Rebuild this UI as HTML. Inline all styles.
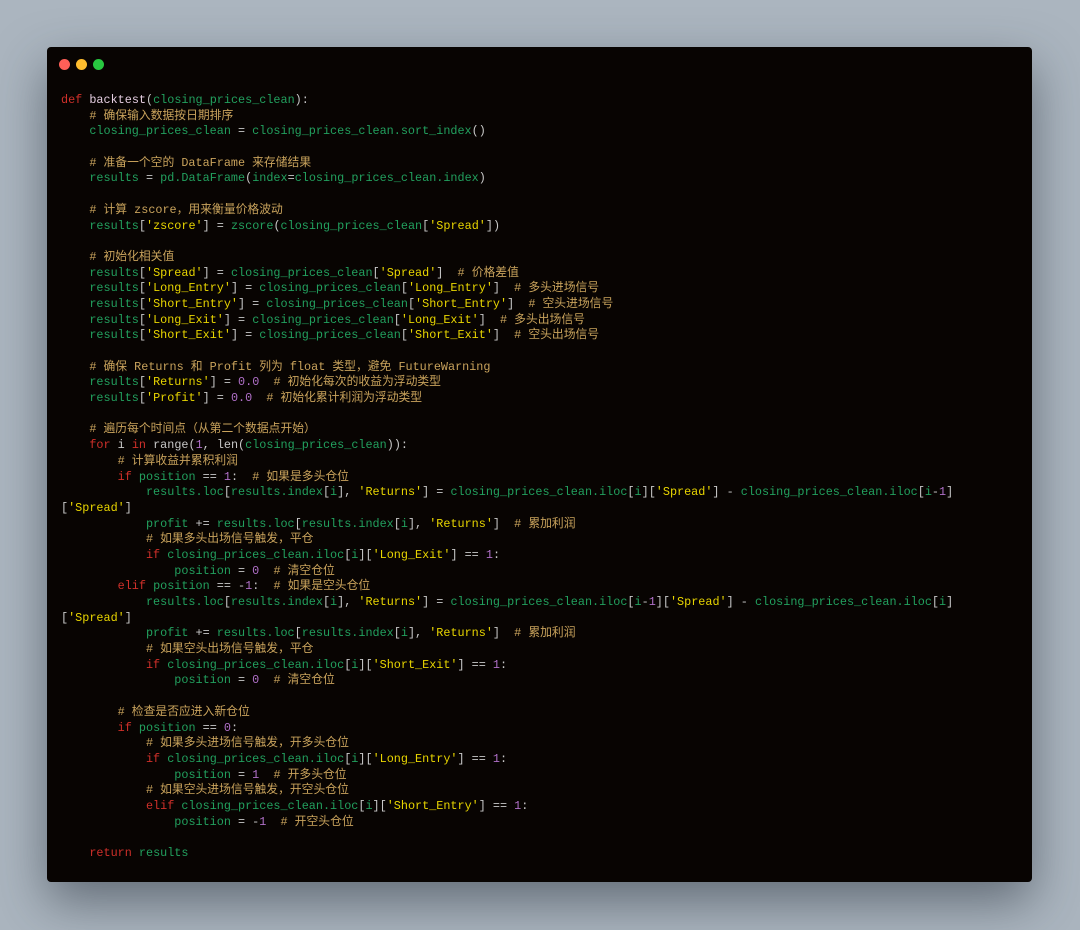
<!DOCTYPE html>
<html><head><meta charset="utf-8"><style>
html,body{margin:0;padding:0;width:1080px;height:930px;background:#abb5bf;overflow:hidden}
.card{position:absolute;left:47px;top:47px;width:985px;height:835px;background:#080402;border-radius:4px;box-shadow:0 20px 50px rgba(40,50,60,.55)}
.dot{position:absolute;top:12px;width:11px;height:11px;border-radius:50%}
pre{position:absolute;left:14px;top:46px;margin:0;font-family:"Liberation Mono","Noto Sans CJK SC",monospace;font-size:11.8px;line-height:15.69px;color:#c8c8c8;white-space:pre}
.k{color:#d0302a}.f{color:#e4cde0}.g{color:#22a05e}.c{color:#c9a35c}.s{color:#e8d500}.n{color:#b070c8}
</style></head><body>
<div class="card">
<div class="dot" style="left:12px;background:#fe5f57"></div>
<div class="dot" style="left:29px;background:#febc2e"></div>
<div class="dot" style="left:46px;background:#28c840"></div>
<pre><span class="k">def</span> <span class="f">backtest</span>(<span class="g">closing_prices_clean</span>):
    <span class="c"># 确保输入数据按日期排序</span>
    <span class="g">closing_prices_clean</span> = <span class="g">closing_prices_clean.sort_index</span>()

    <span class="c"># 准备一个空的 DataFrame 来存储结果</span>
    <span class="g">results</span> = <span class="g">pd.DataFrame</span>(<span class="g">index</span>=<span class="g">closing_prices_clean.index</span>)

    <span class="c"># 计算 zscore，用来衡量价格波动</span>
    <span class="g">results</span>[<span class="s">'zscore'</span>] = <span class="g">zscore</span>(<span class="g">closing_prices_clean</span>[<span class="s">'Spread'</span>])

    <span class="c"># 初始化相关值</span>
    <span class="g">results</span>[<span class="s">'Spread'</span>] = <span class="g">closing_prices_clean</span>[<span class="s">'Spread'</span>]  <span class="c"># 价格差值</span>
    <span class="g">results</span>[<span class="s">'Long_Entry'</span>] = <span class="g">closing_prices_clean</span>[<span class="s">'Long_Entry'</span>]  <span class="c"># 多头进场信号</span>
    <span class="g">results</span>[<span class="s">'Short_Entry'</span>] = <span class="g">closing_prices_clean</span>[<span class="s">'Short_Entry'</span>]  <span class="c"># 空头进场信号</span>
    <span class="g">results</span>[<span class="s">'Long_Exit'</span>] = <span class="g">closing_prices_clean</span>[<span class="s">'Long_Exit'</span>]  <span class="c"># 多头出场信号</span>
    <span class="g">results</span>[<span class="s">'Short_Exit'</span>] = <span class="g">closing_prices_clean</span>[<span class="s">'Short_Exit'</span>]  <span class="c"># 空头出场信号</span>

    <span class="c"># 确保 Returns 和 Profit 列为 float 类型，避免 FutureWarning</span>
    <span class="g">results</span>[<span class="s">'Returns'</span>] = <span class="n">0.0</span>  <span class="c"># 初始化每次的收益为浮动类型</span>
    <span class="g">results</span>[<span class="s">'Profit'</span>] = <span class="n">0.0</span>  <span class="c"># 初始化累计利润为浮动类型</span>

    <span class="c"># 遍历每个时间点（从第二个数据点开始）</span>
    <span class="k">for</span> i <span class="k">in</span> range(<span class="n">1</span>, len(<span class="g">closing_prices_clean</span>)):
        <span class="c"># 计算收益并累积利润</span>
        <span class="k">if</span> <span class="g">position</span> == <span class="n">1</span>:  <span class="c"># 如果是多头仓位</span>
            <span class="g">results.loc</span>[<span class="g">results.index</span>[<span class="g">i</span>], <span class="s">'Returns'</span>] = <span class="g">closing_prices_clean.iloc</span>[<span class="g">i</span>][<span class="s">'Spread'</span>] - <span class="g">closing_prices_clean.iloc</span>[<span class="g">i</span>-<span class="n">1</span>]
[<span class="s">'Spread'</span>]
            <span class="g">profit</span> += <span class="g">results.loc</span>[<span class="g">results.index</span>[<span class="g">i</span>], <span class="s">'Returns'</span>]  <span class="c"># 累加利润</span>
            <span class="c"># 如果多头出场信号触发，平仓</span>
            <span class="k">if</span> <span class="g">closing_prices_clean.iloc</span>[<span class="g">i</span>][<span class="s">'Long_Exit'</span>] == <span class="n">1</span>:
                <span class="g">position</span> = <span class="n">0</span>  <span class="c"># 清空仓位</span>
        <span class="k">elif</span> <span class="g">position</span> == -<span class="n">1</span>:  <span class="c"># 如果是空头仓位</span>
            <span class="g">results.loc</span>[<span class="g">results.index</span>[<span class="g">i</span>], <span class="s">'Returns'</span>] = <span class="g">closing_prices_clean.iloc</span>[<span class="g">i</span>-<span class="n">1</span>][<span class="s">'Spread'</span>] - <span class="g">closing_prices_clean.iloc</span>[<span class="g">i</span>]
[<span class="s">'Spread'</span>]
            <span class="g">profit</span> += <span class="g">results.loc</span>[<span class="g">results.index</span>[<span class="g">i</span>], <span class="s">'Returns'</span>]  <span class="c"># 累加利润</span>
            <span class="c"># 如果空头出场信号触发，平仓</span>
            <span class="k">if</span> <span class="g">closing_prices_clean.iloc</span>[<span class="g">i</span>][<span class="s">'Short_Exit'</span>] == <span class="n">1</span>:
                <span class="g">position</span> = <span class="n">0</span>  <span class="c"># 清空仓位</span>

        <span class="c"># 检查是否应进入新仓位</span>
        <span class="k">if</span> <span class="g">position</span> == <span class="n">0</span>:
            <span class="c"># 如果多头进场信号触发，开多头仓位</span>
            <span class="k">if</span> <span class="g">closing_prices_clean.iloc</span>[<span class="g">i</span>][<span class="s">'Long_Entry'</span>] == <span class="n">1</span>:
                <span class="g">position</span> = <span class="n">1</span>  <span class="c"># 开多头仓位</span>
            <span class="c"># 如果空头进场信号触发，开空头仓位</span>
            <span class="k">elif</span> <span class="g">closing_prices_clean.iloc</span>[<span class="g">i</span>][<span class="s">'Short_Entry'</span>] == <span class="n">1</span>:
                <span class="g">position</span> = -<span class="n">1</span>  <span class="c"># 开空头仓位</span>

    <span class="k">return</span> <span class="g">results</span></pre>
</div>
</body></html>
